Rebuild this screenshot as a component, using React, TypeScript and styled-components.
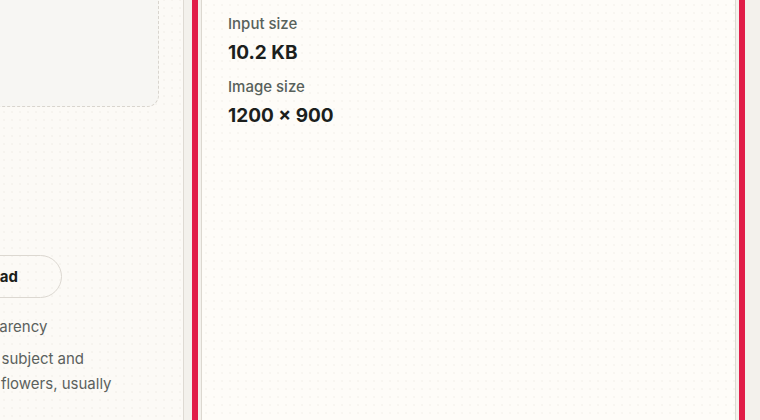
import React from "react";
import styled, { createGlobalStyle } from "styled-components";

const Global = createGlobalStyle`
  html, body { margin: 0; padding: 0; }
  body {
    width: 760px;
    height: 420px;
    overflow: hidden;
    background: #fcfaf6;
    font-family: Inter, "Noto Sans", "Liberation Sans", sans-serif;
    -webkit-font-smoothing: antialiased;
  }
`;

const dots = `
  background-image: radial-gradient(circle, rgba(120, 110, 90, 0.045) 0.8px, transparent 1.2px);
  background-size: 8px 8px;
`;

const Viewport = styled.div`
  width: 760px;
  height: 420px;
  overflow: hidden;
`;

const Page = styled.div`
  display: flex;
  margin-top: -60px;
  margin-left: -136px;
  height: 560px;
`;

const LeftPanel = styled.aside`
  width: 320px;
  flex: none;
  box-sizing: border-box;
  padding: 20px 24px 0 24px;
  background-color: #fcfaf6;
  ${dots}
  border-right: 1px solid #dedad3;
  display: flex;
  flex-direction: column;
`;

const DropZone = styled.div`
  height: 145px;
  border: 1px dashed #d9d5ce;
  border-radius: 12px;
  background: #f7f6f3;
`;

const ButtonRow = styled.div`
  width: 174px;
  display: flex;
  justify-content: flex-end;
  margin-top: 148px;
`;

const PillButton = styled.button`
  height: 43px;
  box-sizing: border-box;
  padding: 0 43px;
  border: 1px solid #dcd8d1;
  border-radius: 999px;
  background: transparent;
  font-family: inherit;
  font-size: 15px;
  font-weight: 700;
  color: #1b1e1c;
  white-space: nowrap;
`;

const Notes = styled.ul`
  list-style: none;
  margin: 16px 0 0 -8px;
  padding: 0;
  display: flex;
  flex-direction: column;
  gap: 7px;
`;

const Note = styled.li`
  font-size: 15px;
  line-height: 25px;
  color: #5b615d;
  white-space: nowrap;
`;

const Column = styled.main`
  flex: 1;
  display: flex;
  padding: 20px 24px 0 17px;
  background: #f3f1ec;
`;

const Card = styled.section`
  flex: 1;
  box-sizing: border-box;
  min-height: 600px;
  border: 1px solid #dcd8d0;
  background-color: #fefcf8;
  ${dots}
  outline: 6px solid #e11d48;
  outline-offset: 3px;
  padding: 53px 24px 24px 26px;
  display: flex;
  flex-direction: column;
  gap: 12px;
`;

const Stat = styled.div`
  display: flex;
  flex-direction: column;
  gap: 7px;
`;

const StatLabel = styled.div`
  font-size: 15px;
  line-height: 20px;
  font-weight: 500;
  color: #58615b;
`;

const StatValue = styled.div`
  font-size: 19px;
  line-height: 24px;
  font-weight: 700;
  color: #1c1f1d;
`;

export default function App() {
  return (
    <Viewport>
      <Global />
      <Page>
        <LeftPanel>
          <DropZone />
          <ButtonRow>
            <PillButton>Download</PillButton>
          </ButtonRow>
          <Notes>
            <Note>Keeps full transparency</Note>
            <Note>
              Best with a clear subject and
              <br />
              background, fur, flowers, usually
            </Note>
          </Notes>
        </LeftPanel>
        <Column>
          <Card>
            <Stat>
              <StatLabel>Input size</StatLabel>
              <StatValue>10.2 KB</StatValue>
            </Stat>
            <Stat>
              <StatLabel>Image size</StatLabel>
              <StatValue>1200 × 900</StatValue>
            </Stat>
          </Card>
        </Column>
      </Page>
    </Viewport>
  );
}
